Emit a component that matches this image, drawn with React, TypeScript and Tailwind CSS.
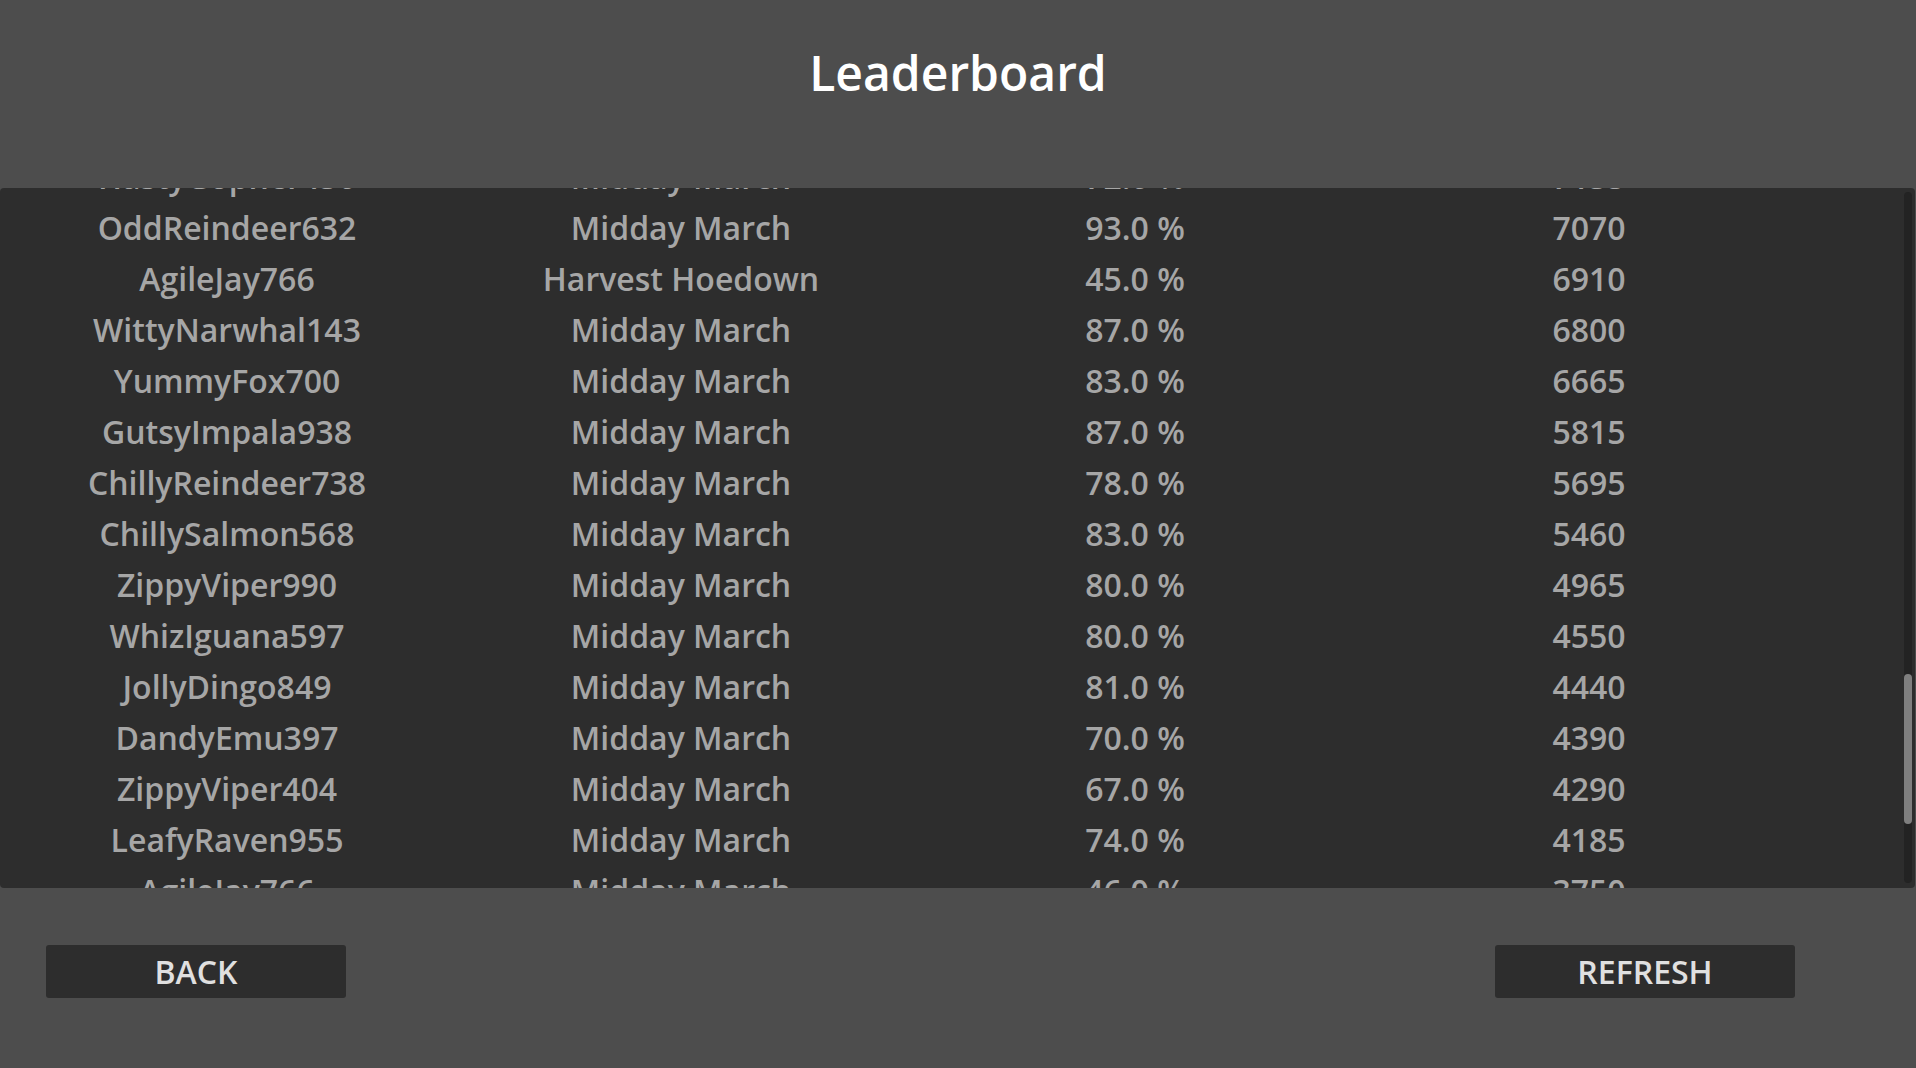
import React from "react";

const rows: [string, string, string, string][] = [
  ["HastyGopher436", "Midday March", "72.0 %", "7135"],
  ["OddReindeer632", "Midday March", "93.0 %", "7070"],
  ["AgileJay766", "Harvest Hoedown", "45.0 %", "6910"],
  ["WittyNarwhal143", "Midday March", "87.0 %", "6800"],
  ["YummyFox700", "Midday March", "83.0 %", "6665"],
  ["GutsyImpala938", "Midday March", "87.0 %", "5815"],
  ["ChillyReindeer738", "Midday March", "78.0 %", "5695"],
  ["ChillySalmon568", "Midday March", "83.0 %", "5460"],
  ["ZippyViper990", "Midday March", "80.0 %", "4965"],
  ["WhizIguana597", "Midday March", "80.0 %", "4550"],
  ["JollyDingo849", "Midday March", "81.0 %", "4440"],
  ["DandyEmu397", "Midday March", "70.0 %", "4390"],
  ["ZippyViper404", "Midday March", "67.0 %", "4290"],
  ["LeafyRaven955", "Midday March", "74.0 %", "4185"],
  ["AgileJay766", "Midday March", "46.0 %", "3750"],
];

export default function App() {
  return (
    <div
      className="w-full h-[1068px] flex flex-col bg-[#4d4d4d] overflow-hidden"
      style={{ fontFamily: '"Open Sans", "Noto Sans", sans-serif' }}
    >
      <div className="h-[188px] shrink-0 flex justify-center">
        <div className="pt-[49px] text-[48px] leading-[48px] font-semibold text-white">
          Leaderboard
        </div>
      </div>
      <div className="relative h-[700px] shrink-0 mr-[1px] bg-[#2d2d2d] rounded-[4px] overflow-hidden">
        <div className="-mt-[37px] flex flex-col">
          {rows.map((r, i) => (
            <div
              key={i}
              className="grid grid-cols-[repeat(4,454px)] h-[51px] text-[32px] leading-[51px] font-semibold text-[#a6a6a6] text-center whitespace-nowrap"
            >
              <div>{r[0]}</div>
              <div>{r[1]}</div>
              <div>{r[2]}</div>
              <div>{r[3]}</div>
            </div>
          ))}
        </div>
        <div className="absolute right-[3px] top-[4px] bottom-[5px] w-[8px] rounded-full bg-[#232323]">
          <div className="absolute left-0 right-0 top-[482px] h-[150px] rounded-full bg-[#7f7f7f]" />
        </div>
      </div>
      <div className="flex-1 flex items-start justify-between pt-[57px] pl-[46px] pr-[121px]">
        <button className="w-[300px] h-[53px] rounded-[3px] bg-[#2d2d2d] text-[#e0e0e0] text-[32px] leading-none font-semibold flex items-center justify-center">
          BACK
        </button>
        <button className="w-[300px] h-[53px] rounded-[3px] bg-[#2d2d2d] text-[#e0e0e0] text-[32px] leading-none font-semibold flex items-center justify-center">
          REFRESH
        </button>
      </div>
    </div>
  );
}
